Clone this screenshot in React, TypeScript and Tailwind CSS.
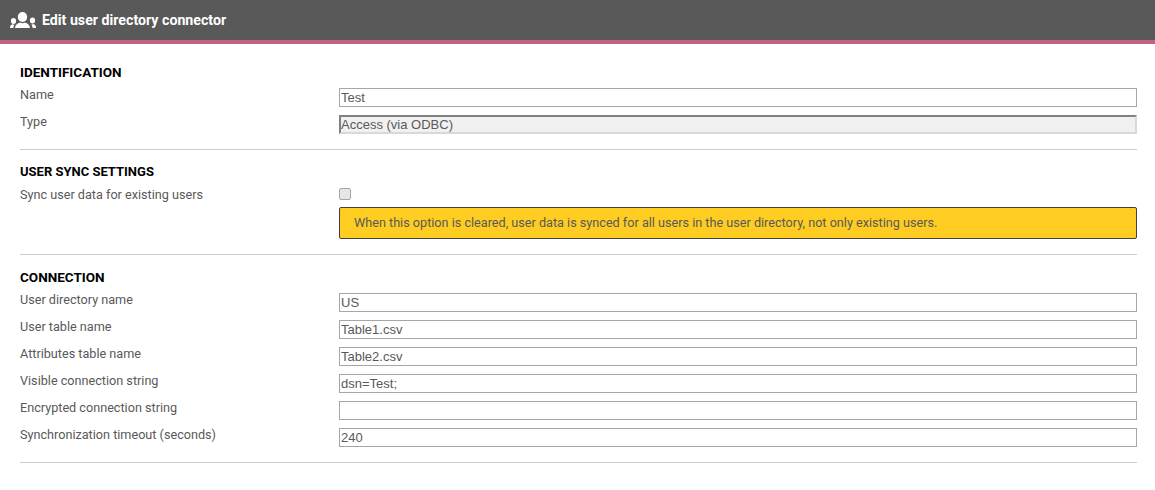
const inputClass =
  "h-[19px] w-full border border-[#a6a6a6] bg-white px-px pb-px font-['Liberation_Sans',sans-serif] text-[13px] leading-[16px] text-[#595959] outline-none";

const labelClass = "-mt-px h-4 text-[12.65px] leading-4 text-[#595959]";

function Field({ label, value }: { label: string; value: string }) {
  return (
    <div className="mb-2 grid grid-cols-[319px_1fr] last:mb-0">
      <span className={labelClass}>{label}</span>
      <input className={inputClass} defaultValue={value} />
    </div>
  );
}

function Heading({ children, size = "text-[13.5px]" }: { children: string; size?: string }) {
  return <h2 className={`mb-2 h-4 ${size} leading-4 font-bold text-black`}>{children}</h2>;
}

function UsersIcon() {
  return (
    <svg viewBox="0 0 26 16" className="h-4 w-[26px] shrink-0 fill-white">
      <ellipse cx="12.500" cy="5" rx="4.700" ry="5" />
      <path d="M5 16c.2-2.800 1.500-4.500 5-5.600 1.400 1 3.600 1 5 0 3.500 1.100 4.800 2.800 5 5.600z" />
      <ellipse cx="3.500" cy="9" rx="2.600" ry="3" />
      <path d="M0 16c0-1.800.6-3 2.400-3.700.6.400 1.500.500 2.200.300C4 13.600 3.500 14.700 3.300 16z" />
      <ellipse cx="22.500" cy="8.500" rx="2.600" ry="3" />
      <path d="M26 16c0-1.800-.6-3.200-2.400-3.900-.6.400-1.500.500-2.200.300.6 1 1.100 2.300 1.300 3.600z" />
    </svg>
  );
}

export default function App() {
  return (
    <div className="min-h-[490px] bg-white font-['Roboto',sans-serif]">
      <header className="flex h-11 items-center gap-[6px] border-b-4 border-[#c1627f] bg-[#595959] pl-[10px]">
        <UsersIcon />
        <h1 className="pt-px text-[14.2px] font-bold text-white">Edit user directory connector</h1>
      </header>

      <main className="pr-[18px] pl-5">
        <section className="border-b border-[#cccccc] pt-5 pb-[15px]">
          <Heading>IDENTIFICATION</Heading>
          <Field label="Name" value="Test" />
          <div className="grid grid-cols-[319px_1fr]">
            <span className={labelClass}>Type</span>
            <input
              readOnly
              defaultValue="Access (via ODBC)"
              className="h-[19px] w-full border-2 border-t-[#808080] border-r-[#d9d9d9] border-b-[#d9d9d9] border-l-[#808080] bg-[#f0f0f0] pb-px font-['Liberation_Sans',sans-serif] text-[13px] leading-[15px] text-[#595959] outline-none"
            />
          </div>
        </section>

        <section className="border-b border-[#cccccc] pt-[14px] pb-[15px]">
          <Heading size="text-[13px]">USER SYNC SETTINGS</Heading>
          <div className="grid grid-cols-[319px_1fr]">
            <span className="h-4 text-[12.65px] leading-[13px] text-[#595959]">Sync user data for existing users</span>
            <div>
              <div className="h-3 w-3 rounded-[2px] border border-[#a6a6a6] bg-[#e6e6e6]" />
              <div className="mt-[7px] flex h-8 items-center rounded-[2px] border border-[#404040] bg-[#ffcc22] pl-[14px] text-[12.65px] text-[#595959]">
                When this option is cleared, user data is synced for all users in the user directory, not only existing users.
              </div>
            </div>
          </div>
        </section>

        <section className="border-b border-[#cccccc] pt-[14px] pb-[15px]">
          <Heading>CONNECTION</Heading>
          <Field label="User directory name" value="US" />
          <Field label="User table name" value="Table1.csv" />
          <Field label="Attributes table name" value="Table2.csv" />
          <Field label="Visible connection string" value="dsn=Test;" />
          <Field label="Encrypted connection string" value="" />
          <Field label="Synchronization timeout (seconds)" value="240" />
        </section>
      </main>
    </div>
  );
}
